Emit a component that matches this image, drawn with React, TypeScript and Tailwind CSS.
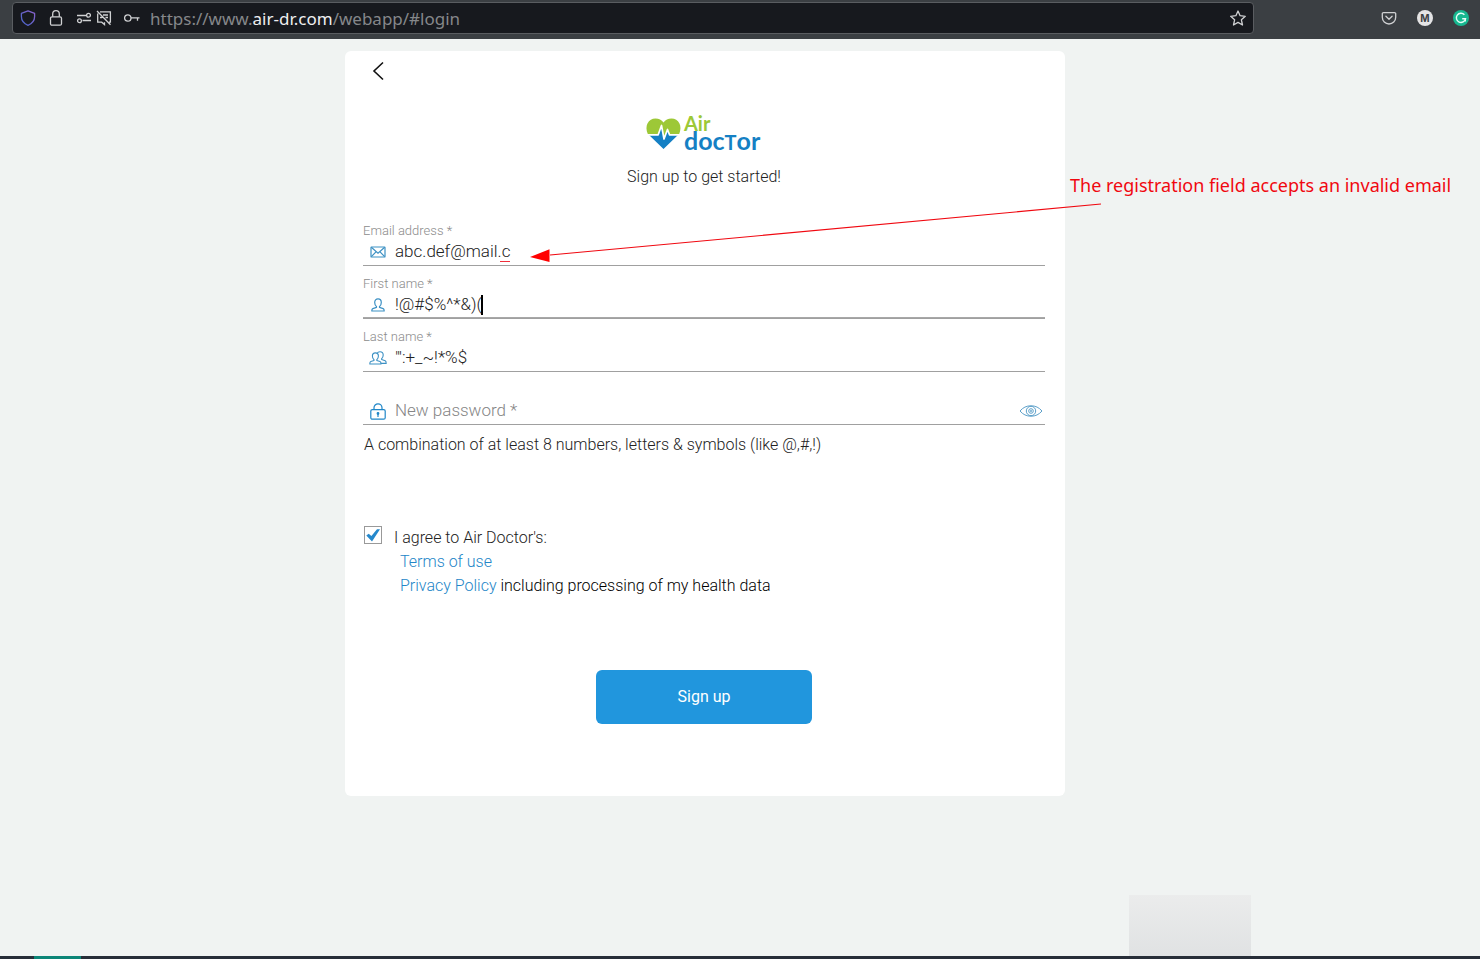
import type { ReactNode } from "react";

function BrowserBar() {
  return (
    <header className="flex h-[39px] shrink-0 items-start bg-[#3b3f43] pt-[2px] pr-[11px] pl-3">
      <div className="flex h-8 flex-1 items-center rounded-sm border border-[#5a5d61] bg-[#17191e] pr-[7px] pl-[7px]">
        <svg className="mr-3 size-4 shrink-0" viewBox="0 0 16 16" fill="none">
          <defs>
            <linearGradient id="shield" x1="0" y1="1" x2="1" y2="0">
              <stop offset="0" stopColor="#4664c8" />
              <stop offset="1" stopColor="#8a62cc" />
            </linearGradient>
          </defs>
          <path d="M8 .8 14.6 3.4v3.1c0 4-2.2 7-6.6 8.8C3.600 13.500 1.400 10.500 1.400 6.500V3.400Z" stroke="url(#shield)" strokeWidth="1.3" strokeLinejoin="round" />
        </svg>
        <svg className="mr-3 size-4 shrink-0" viewBox="0 0 16 16" fill="none" stroke="#d0d1d3" strokeWidth="1.3">
          <rect x="2.500" y="6.800" width="11" height="8.400" rx="1.500" />
          <path d="M4.700 6.800V4a3.300 3.300 0 0 1 6.600 0v2.800" />
        </svg>
        <svg className="mr-1 size-4 shrink-0" viewBox="0 0 16 16" fill="none" stroke="#d0d1d3" strokeWidth="1.300">
          <path d="M1 5.500h9M6.500 10.500H15" />
          <circle cx="12.500" cy="5.300" r="1.900" />
          <circle cx="3.500" cy="10.700" r="1.900" />
        </svg>
        <svg className="mr-3 size-4 shrink-0" viewBox="0 0 16 16" fill="none" stroke="#d0d1d3" strokeWidth="1.300">
          <path d="M4 1.800h10.400v10.400H13M1.700 3.500v8.700h4l2.800 2.400v-2.400M7 5h5M4 7.500h2M9.500 7.500H12M1 1l13.500 13.800" />
        </svg>
        <svg className="mr-[10px] size-4 shrink-0" viewBox="0 0 16 16" fill="none" stroke="#d0d1d3" strokeWidth="1.300">
          <circle cx="3.800" cy="8" r="3.200" />
          <path d="M7 7.800h8.500M13.500 7.800v3" />
        </svg>
        <p className="flex-1 pt-px font-['Noto_Sans',sans-serif] text-[17px] leading-6 font-normal text-[#85878a]">
          https://www.<span className="text-[#eeeeef]">air-dr.com</span>/webapp/#login
        </p>
        <button aria-label="Bookmark this page">
          <svg className="size-4" viewBox="0 0 16 16" fill="none" stroke="#d0d1d3" strokeWidth="1.300" strokeLinejoin="round">
            <path d="m8 1 2.100 4.700 5.200.6-3.900 3.500 1.100 5.200L8 12.400 3.500 15l1.100-5.200L.7 6.300l5.200-.6Z" />
          </svg>
        </button>
      </div>
      <div className="ml-[127px] flex h-8 items-center gap-5">
        <button aria-label="Save to Pocket">
          <svg className="size-4" viewBox="0 0 16 16" fill="none" stroke="#d0d1d3" strokeWidth="1.300" strokeLinecap="round" strokeLinejoin="round">
            <path d="M2.500 2.600h11a1.200 1.200 0 0 1 1.200 1.200v3.500a6.700 6.700 0 0 1-13.400 0V3.800a1.200 1.200 0 0 1 1.200-1.200Z" />
            <path d="m4.900 6.200 3.100 3 3.100-3" />
          </svg>
        </button>
        <button className="flex size-4 items-center justify-center rounded-full bg-[#e4e4e5] font-['Inter',sans-serif] text-[10px] font-bold text-[#3b3f43]">M</button>
        <button aria-label="Grammarly">
          <svg className="size-4" viewBox="0 0 16 16" fill="none">
            <circle cx="8" cy="8" r="8" fill="#17b890" />
            <path d="M11.400 4.800A4.600 4.600 0 1 0 12.500 8.800H9.200M12.300 8.800v2.700" stroke="#e6fff8" strokeWidth="1.400" />
          </svg>
        </button>
      </div>
    </header>
  );
}

function Logo() {
  return (
    <svg className="h-12 w-[126px]" viewBox="-4 -4 126 48" role="img" aria-label="Air Doctor">
      <path d="M3 21.500C-1 12.500 3.500 5.500 10.500 5.500c3.500 0 6 1.500 8 4 2-2.500 4.500-4 8-4 7 0 11.500 7 7.500 16h-9.500L22.500 16 19 27l-2.500-15L13 21.500Z" fill="#9dc837" />
      <path d="M4 22h9l3.500-10L19 27l3.500-11 2 6H33L18.500 36Z" fill="#1580c4" />
      <path d="M1 21.800h12.200l3.300-9.300L19 26l3.500-9.500 2 5.300H36" fill="none" stroke="#fff" strokeWidth="1.700" strokeLinejoin="round" />
      <text x="39" y="18" fill="#9dc837" fontFamily="Lato, sans-serif" fontWeight="700" fontSize="20">Air</text>
      <text x="39" y="37" fill="#1580c4" fontFamily="Lato, sans-serif" fontWeight="700" fontSize="25">
        doc<tspan fontSize="20">T</tspan>or
      </text>
    </svg>
  );
}

const MailIcon = (
  <svg className="h-3 w-4" viewBox="0 0 16 12" fill="none" stroke="#3d91c4" strokeWidth="1.200">
    <rect x="1" y="1" width="14" height="10" rx=".6" />
    <path d="m1.300 1.300 6.700 5.900 6.700-5.900M1.300 10.700l4.900-5M14.700 10.700l-4.900-5" />
  </svg>
);

const PersonIcon = (
  <svg className="size-[14px]" viewBox="0 0 14 14" fill="none" stroke="#3d91c4" strokeWidth="1.200" strokeLinejoin="round">
    <path d="M5.500 8.500C4.200 7.500 3.700 6 3.700 4.500 3.700 2.300 5 .9 7 .9s3.300 1.400 3.300 3.600c0 1.500-.5 3-1.800 4v.9l3.700 1.200c.7.300 1 .9 1 2.400H.8c0-1.500.3-2.100 1-2.400l3.700-1.200Z" />
  </svg>
);

const PeopleIcon = (
  <svg className="h-[14px] w-[18px]" viewBox="0 0 18 14" fill="none" stroke="#3d91c4" strokeWidth="1.100" strokeLinejoin="round">
    <path d="M5 8.700C3.900 7.800 3.400 6.500 3.400 5 3.400 3 4.500 1.900 6.400 1.900S9.400 3 9.400 5c0 1.500-.5 2.800-1.600 3.700v.8l3.200 1.100c.8.300 1 .9 1 2.400H.8c0-1.500.3-2.100 1-2.400L5 9.500Z" />
    <path d="M8.200 2.200C8.800 1 9.700.7 11 .7c2 0 3.200 1.300 3.200 3.300 0 1.500-.5 2.800-1.600 3.700v.8l3.600 1.300c.7.300 1 1.200 1 2.600H12" />
  </svg>
);

const LockIcon = (
  <svg className="h-[17px] w-4" viewBox="0 0 16 17" fill="none" stroke="#2187c8" strokeWidth="1.200">
    <rect x=".8" y="6.600" width="14.400" height="9.600" rx="1.500" />
    <path d="M4 6.600V4.800a4 4 0 0 1 8 0v1.800M8 10v4" />
    <circle cx="8" cy="10.500" r=".8" fill="#2187c8" />
  </svg>
);

type FieldProps = {
  id: string;
  label: string;
  icon: ReactNode;
  type?: string;
  value?: string;
  focused?: boolean;
  children?: ReactNode;
};

function Field({ id, label, icon, type = "text", value, focused, children }: FieldProps) {
  const filled = value !== undefined;
  return (
    <div className={`relative flex h-[53px] flex-col justify-end border-b border-[#a0a0a0] ${focused ? "shadow-[inset_0_-1px_0_#a8a8a8]" : ""}`}>
      <label
        htmlFor={id}
        className={
          filled
            ? "text-[13px] leading-4 text-[#8c8c8c]"
            : "pointer-events-none absolute bottom-0 left-8 text-[17px] leading-7 text-[#858585]"
        }
      >
        {label}
      </label>
      <div className="relative flex h-[26px] items-center">
        <span className="flex w-8 shrink-0 justify-center pr-[3px]">{icon}</span>
        <input
          id={id}
          type={type}
          defaultValue={value}
          spellCheck={false}
          className="h-6 min-w-0 flex-1 bg-transparent text-[17px] text-[#222] outline-none"
        />
        {children}
      </div>
    </div>
  );
}

function SignUpCard() {
  return (
    <section className="relative w-full max-w-[720px] rounded-md bg-white pr-5 pb-[72px] pl-[18px]">
      <button aria-label="Back" className="ml-[9px] flex h-10 items-center">
        <svg className="h-5 w-3" viewBox="0 0 12 20" fill="none" stroke="#111" strokeWidth="1.600">
          <path d="m11 1.500-9 8.500 9 8.500" />
        </svg>
      </button>

      <div className="mt-[18px] flex flex-col items-center">
        <Logo />
        <h1 className="mt-2 text-base leading-6">Sign up to get started!</h1>
      </div>

      <form onSubmit={(event) => event.preventDefault()}>
        <div className="mt-6">
          <Field id="email" label="Email address *" icon={MailIcon} value="abc.def@mail.c">
            <span className="absolute bottom-[3px] left-[137px] h-px w-[10px] bg-[#f0303c]" />
          </Field>
          <Field id="first" label="First name *" icon={PersonIcon} value="!@#$%^*&)(" focused>
            <span className="absolute bottom-[3px] left-[118px] h-5 w-[2px] bg-black" />
          </Field>
          <Field id="last" label="Last name *" icon={PeopleIcon} value={`"':+_~!*%$`} />
          <Field id="password" label="New password *" icon={LockIcon} type="password">
            <button type="button" aria-label="Show password" className="mr-[2px]">
              <svg className="h-3 w-6" viewBox="0 0 24 12" fill="none" stroke="#5b9fc9" strokeWidth="1">
                <path d="M1 6c3-3.500 6.500-5.200 11-5.200S20 2.500 23 6c-3 3.500-6.500 5.200-11 5.200S4 9.500 1 6Z" />
                <circle cx="12" cy="6" r="4.700" />
                <circle cx="12" cy="6" r="2.300" />
                <circle cx="12" cy="6" r=".6" />
              </svg>
            </button>
          </Field>
        </div>
        <p className="mt-2 ml-px text-base leading-6">A combination of at least 8 numbers, letters &amp; symbols (like @,#,!)</p>

        <div className="mt-[69px] ml-px flex items-start">
          <span className="relative mr-3 flex size-[18px]">
            <input id="agree" type="checkbox" defaultChecked className="size-[18px] appearance-none border border-[#999] bg-white" />
            <svg className="pointer-events-none absolute inset-0 size-[18px]" viewBox="0 0 18 18">
              <path d="M2.300 9.500 4.700 7.800l2.700 2.300L13 3.200h3L8 15.500Z" fill="#2588cc" />
            </svg>
          </span>
          <div className="text-base leading-6">
            <label htmlFor="agree">I agree to Air Doctor's:</label>
            <p className="pl-[6px]">
              <a href="#terms" className="text-[#2386c8]">Terms of use</a>
            </p>
            <p className="pl-[6px] text-black">
              <a href="#privacy" className="text-[#2386c8]">Privacy Policy</a> including processing of my health data
            </p>
          </div>
        </div>

        <div className="mt-[72px] flex justify-center">
          <button type="submit" className="h-[54px] w-[216px] rounded-md bg-[#2196dd] text-base font-normal text-white">Sign up</button>
        </div>
      </form>

      <div className="absolute top-[122px] left-full ml-[5px] font-['Noto_Sans',sans-serif] text-lg leading-6 font-normal whitespace-nowrap text-[#f00810]">
        The registration field accepts an invalid email
      </div>
      <svg className="pointer-events-none absolute top-[149px] left-[185px] h-[66px] w-[575px]" viewBox="0 0 575 66">
        <path d="M571 4 20 55" stroke="#f00810" strokeWidth="1.100" />
        <path d="M0 57 19.500 49.300v12.700Z" fill="#f00" />
      </svg>
    </section>
  );
}

export default function App() {
  return (
    <div className="flex min-h-screen flex-col overflow-x-hidden bg-[#f0f3f2] font-['Roboto',sans-serif] font-light text-[#222]">
      <BrowserBar />
      <main className="flex flex-1 justify-center pt-3 pr-[70px]">
        <div className="flex w-full max-w-[720px] items-start">
          <SignUpCard />
        </div>
      </main>
      <div className="flex justify-end pr-[229px]">
        <div className="h-[61px] w-[122px] bg-linear-to-b from-[#ebecec] to-[#e0e2e3]" />
      </div>
      <footer className="flex h-[3px] bg-[#272e38] pl-[34px]">
        <span className="w-[47px] bg-[#0b8577]" />
      </footer>
    </div>
  );
}
